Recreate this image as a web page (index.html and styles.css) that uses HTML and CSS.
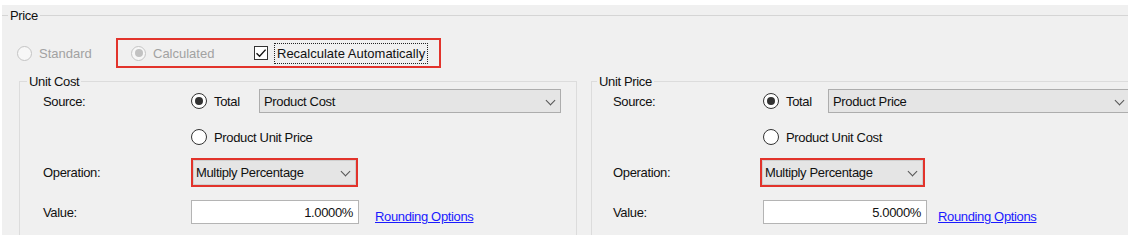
FILE: index.html
```html
<!DOCTYPE html>
<html lang="en">
<head>
  <meta charset="UTF-8" />
  <title>Price Settings</title>
  <link rel="stylesheet" href="styles.css">
</head>
<body>
  <div class="panel">
    <fieldset class="price-group">
      <legend>Price</legend>

      <div class="mode-row">
        <label class="radio disabled standard"><span class="dot"></span>Standard</label>
        <div class="highlight mode-box">
          <label class="radio disabled checked"><span class="dot"></span>Calculated</label>
          <label class="check">
            <span class="box">
              <svg width="12" height="12" viewBox="0 0 12 12"><path d="M1.5 6.2 L4.6 9.3 L10.6 2.6" fill="none" stroke="#111" stroke-width="1.4"/></svg>
            </span>
            <span class="focus">Recalculate Automatically</span>
          </label>
        </div>
      </div>

      <div class="sides">
        <fieldset class="side cost">
          <legend>Unit Cost</legend>
          <div class="row">
            <span class="lbl">Source:</span>
            <label class="radio checked total"><span class="dot"></span>Total</label>
            <div class="select wide">Product Cost<span class="chev"></span></div>
          </div>
          <div class="row r2">
            <span class="lbl"></span>
            <label class="radio"><span class="dot"></span>Product Unit Price</label>
          </div>
          <div class="row r3">
            <span class="lbl">Operation:</span>
            <div class="highlight"><div class="select op">Multiply Percentage<span class="chev"></span></div></div>
          </div>
          <div class="row r4">
            <span class="lbl">Value:</span>
            <div class="input">1.0000%</div>
            <a href="#" class="link">Rounding Options</a>
          </div>
        </fieldset>

        <fieldset class="side price">
          <legend>Unit Price</legend>
          <div class="row">
            <span class="lbl">Source:</span>
            <label class="radio checked total"><span class="dot"></span>Total</label>
            <div class="select wide">Product Price<span class="chev"></span></div>
          </div>
          <div class="row r2">
            <span class="lbl"></span>
            <label class="radio"><span class="dot"></span>Product Unit Cost</label>
          </div>
          <div class="row r3">
            <span class="lbl">Operation:</span>
            <div class="highlight"><div class="select op">Multiply Percentage<span class="chev"></span></div></div>
          </div>
          <div class="row r4">
            <span class="lbl">Value:</span>
            <div class="input">5.0000%</div>
            <a href="#" class="link">Rounding Options</a>
          </div>
        </fieldset>
      </div>
    </fieldset>
  </div>
</body>
</html>
```

FILE: styles.css
```css
*, *::before, *::after { box-sizing: border-box; }
body {
  margin: 0;
  background: #fff;
  font-family: "Liberation Sans", Arial, sans-serif;
  font-size: 13px;
  line-height: 15px;
  letter-spacing: -0.35px;
  color: #111;
}
.panel {
  margin: 5px 0 0 2px;
  width: 1126px;
  height: 230px;
  background: #f0f0f0;
  overflow: hidden;
}

/* group boxes */
fieldset {
  margin: 0;
  min-width: 0;
}
legend {
  padding: 0 2px;
  line-height: 15px;
}
.price-group {
  margin-top: 3px;
  padding: 0;
  border: 0;
  border-top: 1px solid #d5d5d5;
}
.price-group > legend { margin-left: 6px; }

.mode-row {
  display: flex;
  align-items: center;
  height: 30px;
  margin-top: 15px;
  padding-left: 15px;
  letter-spacing: 0;
}
.highlight {
  border: 2px solid #e2332b;
}
.radio.standard { width: 99px; }
.mode-box {
  display: flex;
  align-items: center;
  height: 30px;
  padding: 0 11px 0 13px;
}
.mode-box .radio { width: 123px; }

/* radios */
.radio {
  display: flex;
  align-items: center;
  gap: 7px;
  white-space: nowrap;
}
.radio .dot {
  flex: none;
  width: 16px;
  height: 16px;
  border: 1px solid #333;
  border-radius: 50%;
  background: #fff;
  display: flex;
  align-items: center;
  justify-content: center;
}
.radio.checked .dot::after {
  content: "";
  width: 8px;
  height: 8px;
  border-radius: 50%;
  background: #333;
}
.radio.disabled { color: #a2a2a2; }
.radio.disabled .dot {
  width: 15px;
  height: 15px;
  border-color: #c4c4c4;
  background: #f7f7f7;
}
.radio.disabled.checked .dot::after { background: #c2c2c2; }

/* checkbox */
.check {
  display: flex;
  align-items: center;
  gap: 6px;
}
.check .box {
  width: 14px;
  height: 14px;
  border: 1px solid #333;
  background: #fff;
  display: flex;
  align-items: center;
  justify-content: center;
}
.check .focus {
  border: 1px dotted #222;
  padding: 2px 2px;
}

/* side groups */
.sides {
  display: flex;
  gap: 14px;
  margin-top: 6px;
  padding-left: 17px;
}
.side {
  flex: none;
  width: 558px;
  height: 200px;
  padding: 0 0 0 23px;
  border: 1px solid #dcdcdc;
}
.side.price { padding-left: 21px; }
.side > legend { margin-left: -16px; }

.row {
  display: flex;
  align-items: center;
  height: 24px;
}
.row.r2 { margin-top: 12px; }
.row.r3 { margin-top: 9px; height: 29px; }
.row.r4 { margin-top: 13px; }
.lbl {
  flex: none;
  width: 148px;
}
.price .lbl { width: 150px; }
.cost .total { width: 68px; }
.price .total { width: 65px; }

.select {
  position: relative;
  height: 24px;
  padding: 4px 0 0 4px;
  background: #e5e5e5;
  border: 1px solid #adadad;
  white-space: nowrap;
}
.select.wide { width: 302px; }
.select.op {
  width: 163px;
  height: 25px;
  padding: 4px 0 0 2px;
  border-color: #cfcfcf;
}
.price .highlight { margin-left: -3px; }
.price .select.op { width: 161px; }
.chev {
  position: absolute;
  right: 6px;
  top: 7px;
  width: 7px;
  height: 7px;
  border-right: 1px solid #555;
  border-bottom: 1px solid #555;
  transform: rotate(45deg);
}

.input {
  width: 168px;
  height: 24px;
  padding: 4px 5px 0 0;
  background: #fff;
  border: 1px solid #b4b4b4;
  text-align: right;
}
.price .input { width: 164px; }
.link {
  align-self: flex-end;
  margin-left: 16px;
  color: #1a1aff;
  text-decoration: underline;
}
.price .link { margin-left: 11px; }
```
